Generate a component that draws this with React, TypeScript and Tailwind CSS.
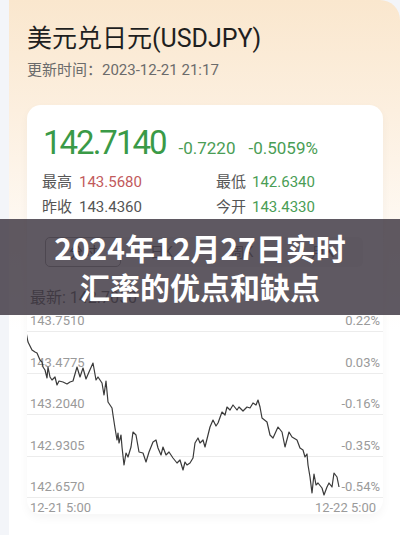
import React from "react";

const pts: [number, number][] = [
  [26, 327], [28, 337], [32, 345], [35, 347], [37, 348], [40, 355], [42, 357], [43, 362], [45, 365],
  [47, 373], [48, 362], [50, 372], [52, 375], [55, 372], [57, 380], [59, 376], [63, 377], [67, 379],
  [70, 377], [73, 376], [77, 362], [80, 372], [83, 363], [86, 374], [89, 367], [93, 358], [96, 375],
  [98, 372], [102, 378], [104, 390], [106, 376], [108, 397], [112, 403], [113, 410], [115, 423],
  [117, 435], [118, 428], [119, 438], [121, 430], [122, 442], [124, 460], [126, 448], [128, 452],
  [131, 442], [133, 427], [136, 430], [139, 447], [143, 448], [146, 457], [149, 447], [153, 437],
  [156, 435], [158, 443], [161, 450], [163, 442], [166, 450], [169, 447], [173, 453], [177, 458],
  [180, 455], [183, 465], [185, 457], [187, 460], [190, 458], [193, 453], [195, 438], [198, 433],
  [200, 438], [203, 435], [205, 442], [208, 430], [210, 422], [213, 415], [216, 421], [218, 418],
  [222, 407], [225, 410], [227, 402], [230, 405], [233, 400], [237, 405], [239, 402], [243, 406],
  [247, 402], [250, 403], [253, 398], [256, 400], [258, 395], [260, 402], [262, 413], [267, 417],
  [270, 430], [273, 433], [278, 422], [282, 427], [285, 442], [289, 427], [292, 432], [297, 435],
  [300, 443], [303, 445], [305, 452], [307, 449], [308, 460], [310, 472], [312, 488], [314, 469],
  [316, 480], [318, 478], [322, 483], [324, 490], [327, 482], [329, 478], [332, 482], [334, 468],
  [337, 472], [339, 482],
];

const rows = [
  { l: "143.7510", r: "0.22%", h: "h-[21px]" },
  { l: "143.4775", r: "0.03%", h: "h-[42px]" },
  { l: "143.2040", r: "-0.16%", h: "h-[41px]" },
  { l: "142.9305", r: "-0.35%", h: "h-[42px]" },
  { l: "142.6570", r: "-0.54%", h: "h-[41px]" },
];

export default function App() {
  return (
    <div
      className="relative w-[400px] h-[535px] overflow-hidden bg-[#f3f5f9]"
      style={{ fontFamily: 'Roboto, "Noto Sans CJK SC", sans-serif' }}
    >
      <div className="ml-[9px] h-[535px] rounded-tr-[20px] bg-[linear-gradient(180deg,#fae7ce_0px,#fcefdf_110px,#fef8f1_220px,#ffffff_330px)] pt-[24px]">
        <div className="pl-[18px] text-[25px] leading-[30px] text-[#1f1f1f]">美元兑日元(USDJPY)</div>
        <div className="mt-[6px] pl-[18px] text-[15px] leading-[20px] text-[#6b6b6b]">
          更新时间：2023-12-21 21:17
        </div>

        <div className="mt-[25px] ml-[18px] w-[356px] h-[409px] rounded-[14px] bg-white shadow-[0_4px_10px_rgba(0,0,0,0.04)] pt-[18px]">
          <div className="flex items-baseline pl-[16px] leading-[40px]">
            <span className="text-[33px] tracking-[-2px] text-[#3a9a47]">142.7140</span>
            <span className="ml-[13px] text-[17px] text-[#4a9d55]">-0.7220</span>
            <span className="ml-[13px] text-[17px] text-[#4a9d55]">-0.5059%</span>
          </div>
          <div className="mt-[2px] grid grid-cols-[174px_1fr] pl-[15px] text-[15px] leading-[24px]">
            <div className="flex">
              <span className="w-[37px] text-[#555]">最高</span>
              <span className="text-[#c25a5c]">143.5680</span>
            </div>
            <div className="flex">
              <span className="w-[36px] text-[#555]">最低</span>
              <span className="text-[#4a9d55]">142.6340</span>
            </div>
          </div>
          <div className="mt-[1px] grid grid-cols-[174px_1fr] pl-[15px] text-[15px] leading-[24px]">
            <div className="flex">
              <span className="w-[37px] text-[#555]">昨收</span>
              <span className="text-[#555]">143.4360</span>
            </div>
            <div className="flex">
              <span className="w-[36px] text-[#555]">今开</span>
              <span className="text-[#4a9d55]">143.4330</span>
            </div>
          </div>

          <div className="mt-[18px] ml-[18px] flex w-[318px] h-[30px] rounded-[5px] bg-[#f5f5f5] text-[14px] text-[#666]">
            <div className="flex w-[76px] items-center justify-center rounded-[5px] border border-[#999] bg-white text-[#333]">分时</div>
            <div className="flex flex-1 items-center justify-center">日K</div>
            <div className="flex flex-1 items-center justify-center">周K</div>
            <div className="flex flex-1 items-center justify-center">月K</div>
          </div>

          <div className="mt-[20px] pl-[3px] text-[16px] leading-[22px] text-[#555]">最新: 142.7050</div>

          <div className="relative mt-[2px]">
            {rows.map((r) => (
              <div
                key={r.l}
                className={`${r.h} flex items-end justify-between border-b border-[#ececec] pl-[3px] pr-[3px] text-[13px] leading-[16px] text-[#9a9a9a]`}
              >
                <span className="pb-[2px]">{r.l}</span>
                <span className="pb-[2px]">{r.r}</span>
              </div>
            ))}
            <div className="flex h-[20px] items-center justify-between pl-[3px] pr-[7px] text-[13px] text-[#9a9a9a]">
              <span>12-21 5:00</span>
              <span>12-22 5:00</span>
            </div>
            <svg
              className="absolute left-0 top-0"
              width="356"
              height="207"
              viewBox="27 306 356 207"
            >
              <polyline
                points={pts.map((p) => p.join(",")).join(" ")}
                fill="none"
                stroke="#3a3a3a"
                strokeWidth="1.2"
                strokeLinejoin="round"
              />
            </svg>
          </div>
        </div>
      </div>

      <div
        className="absolute left-0 top-[219px] flex h-[96px] w-[400px] flex-col items-center justify-center bg-[rgba(60,52,64,0.82)] text-[30px] font-bold leading-[39px] text-white"
        style={{ fontFamily: '"Noto Sans CJK SC", sans-serif' }}
      >
        <div>2024年12月27日实时</div>
        <div>汇率的优点和缺点</div>
      </div>
    </div>
  );
}
